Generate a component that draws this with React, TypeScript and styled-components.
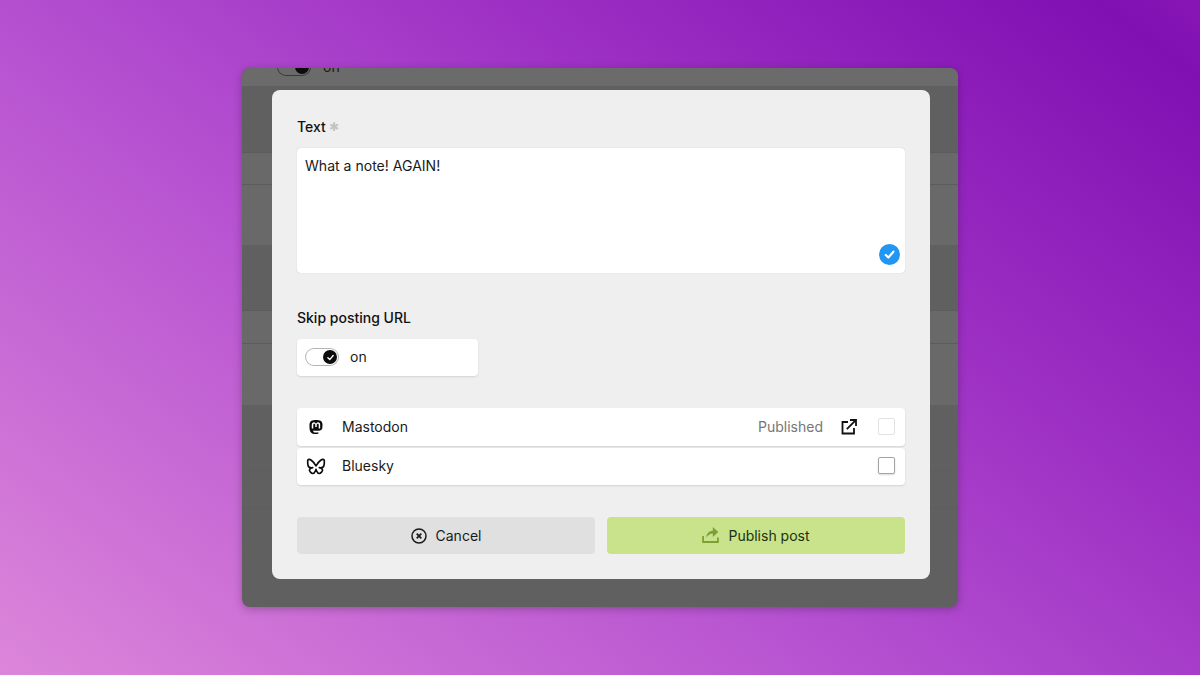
import styled, { createGlobalStyle } from "styled-components";
import { FaMastodon } from "react-icons/fa";
import { TbBrandBluesky } from "react-icons/tb";

const GlobalStyle = createGlobalStyle`
  html, body {
    margin: 0;
    padding: 0;
  }
  body {
    font-family: Inter, "Liberation Sans", sans-serif;
    color: #1a1a1a;
  }
`;

const Page = styled.div`
  width: 1200px;
  height: 675px;
  overflow: hidden;
  display: flex;
  justify-content: center;
  padding-top: 68px;
  box-sizing: border-box;
  background: linear-gradient(37deg, #dc86da 0%, #b44fd0 43%, #9a2cc2 70%, #8010b2 95%, #8816b6 100%);
`;

const Backdrop = styled.div`
  position: relative;
  width: 716px;
  height: 539px;
  border-radius: 8px;
  background: #606060;
  box-shadow: 0 2px 8px rgba(0, 0, 0, 0.25);
`;

const BackdropRows = styled.div`
  display: flex;
  flex-direction: column;
  height: 100%;
  border-radius: 8px;
  overflow: hidden;
`;

const BackRow = styled.div<{ $h: number; $light?: boolean; $line?: "solid" | "dashed" }>`
  flex: 0 0 ${(p) => p.$h}px;
  background: ${(p) => (p.$light ? "#696969" : "transparent")};
  border-top: ${(p) => (p.$line ? `1px ${p.$line} #5c5c5c` : "none")};
  box-sizing: border-box;
`;

const BackToggleRow = styled.div`
  flex: 0 0 18px;
  overflow: hidden;
  display: flex;
  align-items: flex-end;
  gap: 13px;
  padding: 0 0 11px 36px;
  box-sizing: border-box;
  background: #6b6b6b;
  font-size: 14px;
  line-height: 16px;
  color: #1c1c1c;
`;

const Modal = styled.div`
  position: absolute;
  top: 22px;
  left: 30px;
  width: 658px;
  height: 489px;
  box-sizing: border-box;
  padding: 27px 25px 25px;
  display: flex;
  flex-direction: column;
  background: #efefef;
  border-radius: 8px;
`;

const Label = styled.div`
  font-size: 14px;
  font-weight: 500;
  line-height: 20px;
  color: #111;
  display: flex;
  align-items: center;
  gap: 3px;
`;

const Required = styled.span`
  font-size: 12px;
  color: #c2c2c2;
`;

const NoteBox = styled.div`
  position: relative;
  height: 125px;
  margin-top: 11px;
  box-sizing: border-box;
  padding: 8px 8px;
  background: #fff;
  border-radius: 4px;
  box-shadow: 0 0 1px rgba(0, 0, 0, 0.25);
  font-size: 14.05px;
  line-height: 20px;
  color: #1a1a1a;
`;

const Valid = styled.span`
  position: absolute;
  right: 5px;
  bottom: 8px;
  width: 21px;
  height: 21px;
  display: flex;
  align-items: center;
  justify-content: center;
  border-radius: 50%;
  background: #2196f3;
`;

const SkipLabel = styled(Label)`
  margin-top: 35px;
`;

const ToggleCard = styled.div`
  width: 181px;
  height: 37px;
  margin-top: 11px;
  box-sizing: border-box;
  padding: 0 0 1px 9px;
  display: flex;
  align-items: center;
  gap: 12px;
  background: #fff;
  border-radius: 4px;
  box-shadow: 0 1px 2px rgba(0, 0, 0, 0.12);
  font-size: 14px;
  line-height: 16px;
  color: #1a1a1a;
`;

const Toggle = styled.span<{ $dim?: boolean }>`
  width: 32px;
  height: 16px;
  flex: none;
  display: flex;
  align-items: center;
  justify-content: flex-end;
  padding-right: 1px;
  border-radius: 8px;
  box-sizing: border-box;
  background: ${(p) => (p.$dim ? "#6a6a6a" : "#fff")};
  box-shadow: 0 0 0 1px ${(p) => (p.$dim ? "#3a3a3a" : "#b4b4b4")};
`;

const Knob = styled.span`
  width: 14px;
  height: 14px;
  display: flex;
  align-items: center;
  justify-content: center;
  border-radius: 50%;
  background: #0c0c0c;
`;

const Services = styled.div`
  margin-top: 32px;
  display: flex;
  flex-direction: column;
  gap: 2px;
`;

const ServiceRow = styled.div`
  height: 37.5px;
  box-sizing: border-box;
  padding: 0 10px;
  display: flex;
  align-items: center;
  background: #fff;
  border-radius: 4px;
  box-shadow: 0 1px 2px rgba(0, 0, 0, 0.12);
  font-size: 14px;
  color: #1a1a1a;

  &:last-child {
    padding-bottom: 1px;
  }
`;

const ServiceIcon = styled.span`
  width: 17px;
  height: 17px;
  flex: none;
  display: flex;
  align-items: center;
  justify-content: center;
  margin-right: 18px;
  color: #0c0c0c;

  svg {
    flex: none;
  }
`;

const ServiceName = styled.span`
  flex: 1;
`;

const Status = styled.span`
  color: #767676;
  margin-right: 18px;
`;

const OpenLink = styled.span`
  width: 16px;
  height: 16px;
  display: flex;
  margin-right: 21px;
`;

const Checkbox = styled.span<{ $disabled?: boolean }>`
  width: 17px;
  height: 17px;
  flex: none;
  box-sizing: border-box;
  border-radius: 2px;
  background: #fff;
  border: 1px solid ${(p) => (p.$disabled ? "#e2e2e2" : "#a4a4a4")};
  box-shadow: ${(p) => (p.$disabled ? "none" : "0 1px 2px rgba(0, 0, 0, 0.15)")};
`;

const Actions = styled.div`
  margin-top: 32px;
  display: grid;
  grid-template-columns: 298px 298px;
  gap: 12px;
`;

const ActionButton = styled.button<{ $primary?: boolean }>`
  height: 37px;
  border: none;
  border-radius: 4px;
  padding: 0;
  display: flex;
  align-items: center;
  justify-content: center;
  gap: 9px;
  font-family: inherit;
  font-size: 14px;
  font-weight: 400;
  background: ${(p) => (p.$primary ? "#c8e38c" : "#e0e0e0")};
  color: ${(p) => (p.$primary ? "#22300c" : "#1a1a1a")};
`;

const SmallCheck = ({ size, width }: { size: number; width: number }) => (
  <svg width={size} height={size} viewBox="0 0 12 12" fill="none">
    <path d="M2.500 6.400 5 8.800 9.600 3.400" stroke="#fff" strokeWidth={width} strokeLinecap="round" strokeLinejoin="round" />
  </svg>
);

const CancelIcon = () => (
  <svg width="16" height="16" viewBox="0 0 16 16" fill="none" stroke="#1a1a1a">
    <circle cx="8" cy="8" r="7" strokeWidth="1.500" />
    <path d="M5.700 5.700 10.300 10.300M10.300 5.700 5.700 10.300" strokeWidth="1.700" />
  </svg>
);

const ExternalIcon = () => (
  <svg width="16" height="16" viewBox="0 0 16 16" fill="none" stroke="#111" strokeWidth="1.800">
    <path d="M7 3H1.500v11.500H13V9" />
    <path d="M5.800 10.200 14.600 1.400" />
    <path d="M9 1h6v6" />
  </svg>
);

const PublishIcon = () => (
  <svg width="17" height="17" viewBox="0 0 17 17" fill="none">
    <path d="M1.100 9v6h14.800V10.500" stroke="#7f9f35" strokeWidth="1.800" />
    <path d="M4.400 10.500C4.400 6.500 7 4 10.800 3.800V0L16.300 5 10.800 10V6.500C8.500 6.500 6 7.800 4.400 10.500Z" fill="#7f9f35" />
  </svg>
);

export default function App() {
  return (
    <>
      <GlobalStyle />
      <Page>
        <Backdrop>
          <BackdropRows>
            <BackToggleRow>
              <Toggle $dim>
                <Knob />
              </Toggle>
              on
            </BackToggleRow>
            <BackRow $h={66} />
            <BackRow $h={32} $light $line="solid" />
            <BackRow $h={61} $light $line="solid" />
            <BackRow $h={65} />
            <BackRow $h={33} $light $line="solid" />
            <BackRow $h={62} $light $line="solid" />
            <BackRow $h={65} />
            <BackRow $h={37} $line="dashed" />
            <BackRow $h={100} $line="dashed" />
          </BackdropRows>
          <Modal>
            <Label>
              Text <Required>✱</Required>
            </Label>
            <NoteBox>
              What a note! AGAIN!
              <Valid>
                <SmallCheck size={13} width={2} />
              </Valid>
            </NoteBox>
            <SkipLabel>Skip posting URL</SkipLabel>
            <ToggleCard>
              <Toggle>
                <Knob>
                  <SmallCheck size={9} width={1.8} />
                </Knob>
              </Toggle>
              on
            </ToggleCard>
            <Services>
              <ServiceRow>
                <ServiceIcon>
                  <FaMastodon size={16} />
                </ServiceIcon>
                <ServiceName>Mastodon</ServiceName>
                <Status>Published</Status>
                <OpenLink>
                  <ExternalIcon />
                </OpenLink>
                <Checkbox $disabled />
              </ServiceRow>
              <ServiceRow>
                <ServiceIcon>
                  <TbBrandBluesky size={20} strokeWidth={2} />
                </ServiceIcon>
                <ServiceName>Bluesky</ServiceName>
                <Checkbox />
              </ServiceRow>
            </Services>
            <Actions>
              <ActionButton>
                <CancelIcon />
                Cancel
              </ActionButton>
              <ActionButton $primary>
                <PublishIcon />
                Publish post
              </ActionButton>
            </Actions>
          </Modal>
        </Backdrop>
      </Page>
    </>
  );
}
